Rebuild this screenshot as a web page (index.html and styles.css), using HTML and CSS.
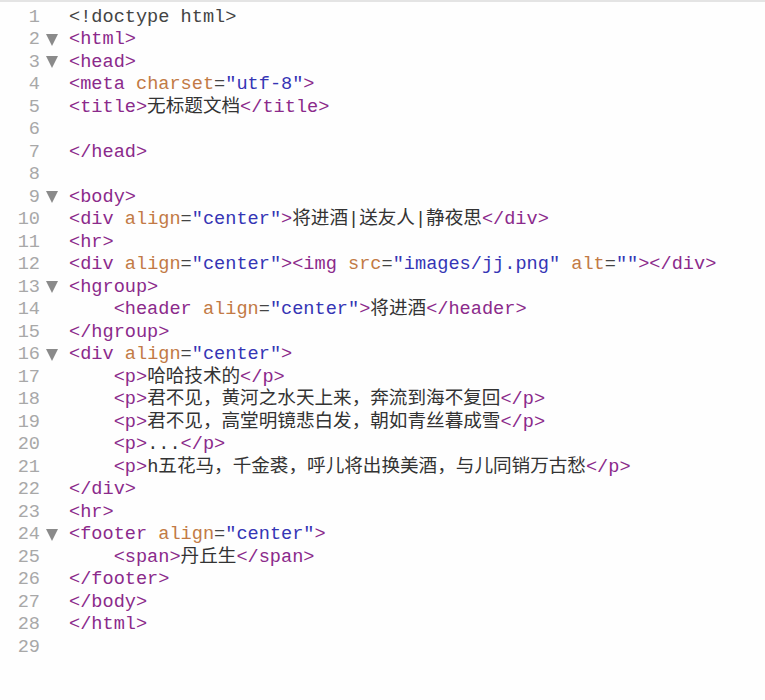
FILE: index.html
```html
<!DOCTYPE html>
<html>
<head>
  <meta charset="utf-8">
  <title>代码视图</title>
  <link rel="stylesheet" href="styles.css">
</head>
<body>
  <div class="editor">
    <div class="line"><span class="num">1</span><span class="fold"></span><span class="code"><span class="doc">&lt;!doctype html&gt;</span></span></div>
    <div class="line"><span class="num">2</span><span class="fold open"></span><span class="code"><span class="t">&lt;html&gt;</span></span></div>
    <div class="line"><span class="num">3</span><span class="fold open"></span><span class="code"><span class="t">&lt;head&gt;</span></span></div>
    <div class="line"><span class="num">4</span><span class="fold"></span><span class="code"><span class="t">&lt;meta</span> <span class="a">charset</span><span class="eq">=</span><span class="v">"utf-8"</span><span class="t">&gt;</span></span></div>
    <div class="line"><span class="num">5</span><span class="fold"></span><span class="code"><span class="t">&lt;title&gt;</span>无标题文档<span class="t">&lt;/title&gt;</span></span></div>
    <div class="line"><span class="num">6</span><span class="fold"></span><span class="code"></span></div>
    <div class="line"><span class="num">7</span><span class="fold"></span><span class="code"><span class="t">&lt;/head&gt;</span></span></div>
    <div class="line"><span class="num">8</span><span class="fold"></span><span class="code"></span></div>
    <div class="line"><span class="num">9</span><span class="fold open"></span><span class="code"><span class="t">&lt;body&gt;</span></span></div>
    <div class="line"><span class="num">10</span><span class="fold"></span><span class="code"><span class="t">&lt;div</span> <span class="a">align</span><span class="eq">=</span><span class="v">"center"</span><span class="t">&gt;</span>将进酒|送友人|静夜思<span class="t">&lt;/div&gt;</span></span></div>
    <div class="line"><span class="num">11</span><span class="fold"></span><span class="code"><span class="t">&lt;hr&gt;</span></span></div>
    <div class="line"><span class="num">12</span><span class="fold"></span><span class="code"><span class="t">&lt;div</span> <span class="a">align</span><span class="eq">=</span><span class="v">"center"</span><span class="t">&gt;&lt;img</span> <span class="a">src</span><span class="eq">=</span><span class="v">"images/jj.png"</span> <span class="a">alt</span><span class="eq">=</span><span class="v">""</span><span class="t">&gt;&lt;/div&gt;</span></span></div>
    <div class="line"><span class="num">13</span><span class="fold open"></span><span class="code"><span class="t">&lt;hgroup&gt;</span></span></div>
    <div class="line"><span class="num">14</span><span class="fold"></span><span class="code">    <span class="t">&lt;header</span> <span class="a">align</span><span class="eq">=</span><span class="v">"center"</span><span class="t">&gt;</span>将进酒<span class="t">&lt;/header&gt;</span></span></div>
    <div class="line"><span class="num">15</span><span class="fold"></span><span class="code"><span class="t">&lt;/hgroup&gt;</span></span></div>
    <div class="line"><span class="num">16</span><span class="fold open"></span><span class="code"><span class="t">&lt;div</span> <span class="a">align</span><span class="eq">=</span><span class="v">"center"</span><span class="t">&gt;</span></span></div>
    <div class="line"><span class="num">17</span><span class="fold"></span><span class="code">    <span class="t">&lt;p&gt;</span>哈哈技术的<span class="t">&lt;/p&gt;</span></span></div>
    <div class="line"><span class="num">18</span><span class="fold"></span><span class="code">    <span class="t">&lt;p&gt;</span>君不见，黄河之水天上来，奔流到海不复回<span class="t">&lt;/p&gt;</span></span></div>
    <div class="line"><span class="num">19</span><span class="fold"></span><span class="code">    <span class="t">&lt;p&gt;</span>君不见，高堂明镜悲白发，朝如青丝暮成雪<span class="t">&lt;/p&gt;</span></span></div>
    <div class="line"><span class="num">20</span><span class="fold"></span><span class="code">    <span class="t">&lt;p&gt;</span>...<span class="t">&lt;/p&gt;</span></span></div>
    <div class="line"><span class="num">21</span><span class="fold"></span><span class="code">    <span class="t">&lt;p&gt;</span>h五花马，千金裘，呼儿将出换美酒，与儿同销万古愁<span class="t">&lt;/p&gt;</span></span></div>
    <div class="line"><span class="num">22</span><span class="fold"></span><span class="code"><span class="t">&lt;/div&gt;</span></span></div>
    <div class="line"><span class="num">23</span><span class="fold"></span><span class="code"><span class="t">&lt;hr&gt;</span></span></div>
    <div class="line"><span class="num">24</span><span class="fold open"></span><span class="code"><span class="t">&lt;footer</span> <span class="a">align</span><span class="eq">=</span><span class="v">"center"</span><span class="t">&gt;</span></span></div>
    <div class="line"><span class="num">25</span><span class="fold"></span><span class="code">    <span class="t">&lt;span&gt;</span>丹丘生<span class="t">&lt;/span&gt;</span></span></div>
    <div class="line"><span class="num">26</span><span class="fold"></span><span class="code"><span class="t">&lt;/footer&gt;</span></span></div>
    <div class="line"><span class="num">27</span><span class="fold"></span><span class="code"><span class="t">&lt;/body&gt;</span></span></div>
    <div class="line"><span class="num">28</span><span class="fold"></span><span class="code"><span class="t">&lt;/html&gt;</span></span></div>
    <div class="line"><span class="num">29</span><span class="fold"></span><span class="code"></span></div>
  </div>
</body>
</html>
```

FILE: styles.css
```css
html, body {
  margin: 0;
  background: #fefefe;
}

.editor {
  border-top: 2px solid #e4e4e4;
  padding-top: 4.5px;
  font-family: "Liberation Mono", "Noto Sans CJK SC", monospace;
  font-size: 18.6px;
  line-height: 22.5px;
  color: #333;
}

.line {
  display: flex;
  height: 22.5px;
  white-space: pre;
}

.num {
  width: 40px;
  text-align: right;
  color: #a8a8a8;
  flex-shrink: 0;
}

.fold {
  width: 29px;
  padding: 4.5px 0 0 6px;
  box-sizing: border-box;
  flex-shrink: 0;
}

/* collapse arrow */
.fold.open::before {
  content: "";
  display: block;
  width: 0;
  height: 0;
  border-left: 6px solid transparent;
  border-right: 6px solid transparent;
  border-top: 12px solid #8a8a8a;
}

.code {
  flex: 1;
}

.doc {
  color: #444;
}

.t {
  color: #8b2a8b;
}

.a {
  color: #c27a45;
}

.eq {
  color: #444;
}

.v {
  color: #3535b5;
}
```
